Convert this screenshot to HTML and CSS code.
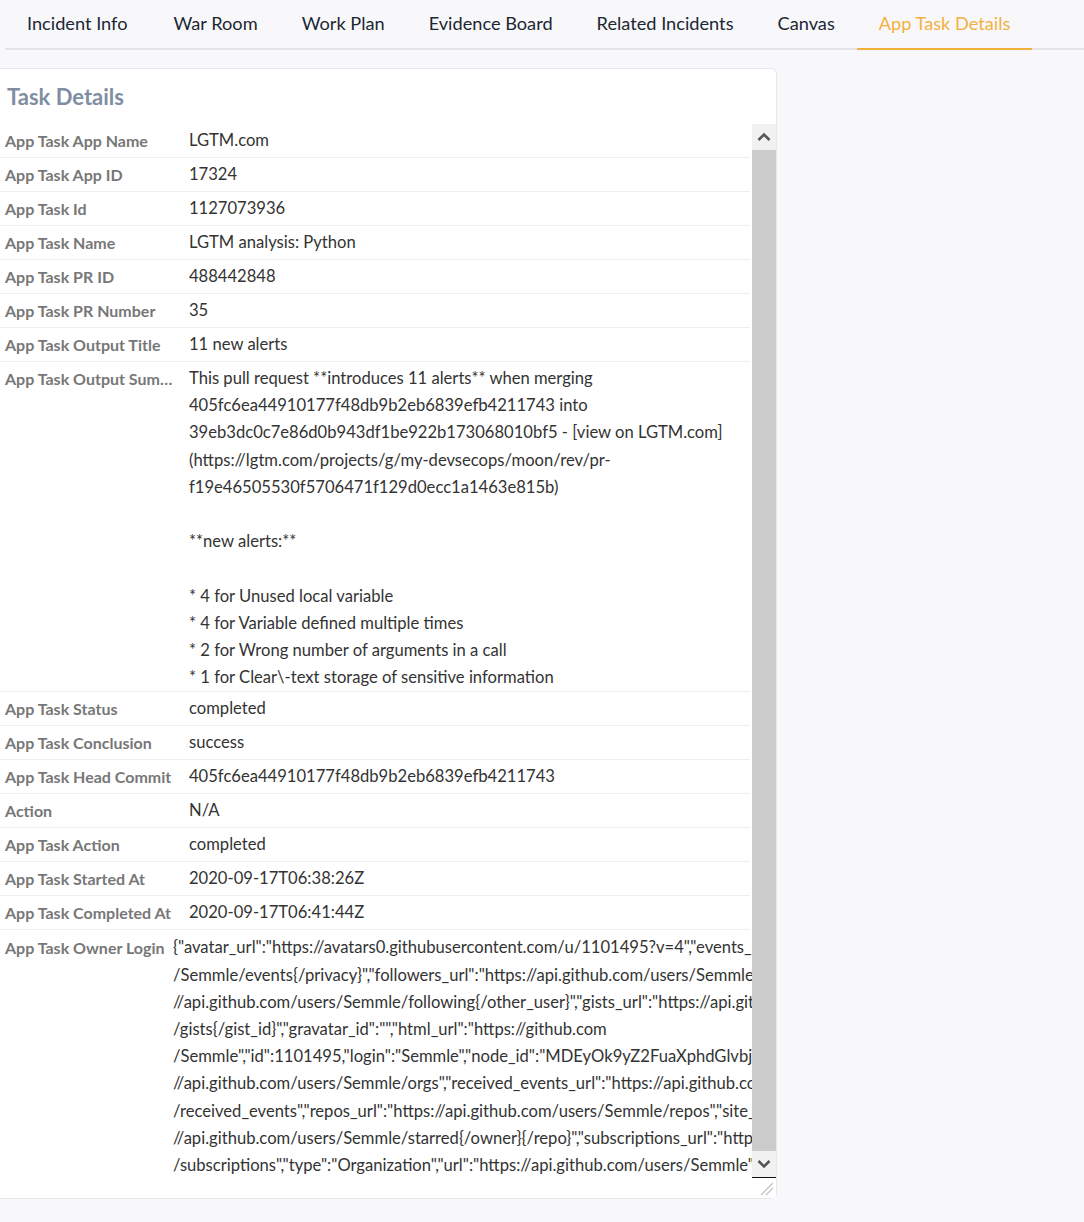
FILE: index.html
```html
<!DOCTYPE html>
<html lang="en">
<head>
<meta charset="utf-8">
<title>App Task Details</title>
<link rel="stylesheet" href="styles.css">
</head>
<body>
<nav class="tabs">
  <a class="tab">Incident Info</a>
  <a class="tab">War Room</a>
  <a class="tab">Work Plan</a>
  <a class="tab">Evidence Board</a>
  <a class="tab">Related Incidents</a>
  <a class="tab">Canvas</a>
  <a class="tab tab-active">App Task Details</a>
</nav>

<section class="card">
  <h2 class="card-title">Task Details</h2>
  <div class="scroller">
    <div class="rows">
      <div class="row"><div class="label">App Task App Name</div><div class="value">LGTM.com</div></div>
      <div class="row"><div class="label">App Task App ID</div><div class="value">17324</div></div>
      <div class="row"><div class="label">App Task Id</div><div class="value">1127073936</div></div>
      <div class="row"><div class="label">App Task Name</div><div class="value">LGTM analysis: Python</div></div>
      <div class="row"><div class="label">App Task PR ID</div><div class="value">488442848</div></div>
      <div class="row"><div class="label">App Task PR Number</div><div class="value">35</div></div>
      <div class="row"><div class="label">App Task Output Title</div><div class="value">11 new alerts</div></div>
      <div class="row row-multi"><div class="label">App Task Output Summary</div><div class="value value-lines">This pull request **introduces 11 alerts** when merging<br>405fc6ea44910177f48db9b2eb6839efb4211743 into<br>39eb3dc0c7e86d0b943df1be922b173068010bf5 - [view on LGTM.com]<br>(https://lgtm.com/projects/g/my-devsecops/moon/rev/pr-<br>f19e46505530f5706471f129d0ecc1a1463e815b)<br>&nbsp;<br>**new alerts:**<br>&nbsp;<br>* 4 for Unused local variable<br>* 4 for Variable defined multiple times<br>* 2 for Wrong number of arguments in a call<br>* 1 for Clear\-text storage of sensitive information</div></div>
      <div class="row"><div class="label">App Task Status</div><div class="value">completed</div></div>
      <div class="row"><div class="label">App Task Conclusion</div><div class="value">success</div></div>
      <div class="row"><div class="label">App Task Head Commit</div><div class="value">405fc6ea44910177f48db9b2eb6839efb4211743</div></div>
      <div class="row"><div class="label">Action</div><div class="value">N/A</div></div>
      <div class="row"><div class="label">App Task Action</div><div class="value">completed</div></div>
      <div class="row"><div class="label">App Task Started At</div><div class="value">2020-09-17T06:38:26Z</div></div>
      <div class="row"><div class="label">App Task Completed At</div><div class="value">2020-09-17T06:41:44Z</div></div>
      <div class="row row-multi row-owner"><div class="label">App Task Owner Login</div><div class="value value-lines">{"avatar_url":"https://avatars0.githubusercontent.com/u/1101495?v=4","events_url":"https://api.github.com/users<br>/Semmle/events{/privacy}","followers_url":"https://api.github.com/users/Semmle/followers","following_url":"https:<br>//api.github.com/users/Semmle/following{/other_user}","gists_url":"https://api.github.com/users/Semmle<br>/gists{/gist_id}","gravatar_id":"","html_url":"https://github.com<br>/Semmle","id":1101495,"login":"Semmle","node_id":"MDEyOk9yZ2FuaXphdGlvbjExMDE0OTU=","organizations_url":"https:<br>//api.github.com/users/Semmle/orgs","received_events_url":"https://api.github.com/users/Semmle<br>/received_events","repos_url":"https://api.github.com/users/Semmle/repos","site_admin":false,"starred_url":"https:<br>//api.github.com/users/Semmle/starred{/owner}{/repo}","subscriptions_url":"https://api.github.com/users/Semmle<br>/subscriptions","type":"Organization","url":"https://api.github.com/users/Semmle"}</div></div>
    </div>
    <div class="scrollbar">
      <div class="sb-btn sb-up">
        <svg width="14" height="10" viewBox="0 0 14 10"><path d="M1.5 8 L7 2.5 L12.5 8" fill="none" stroke="#555" stroke-width="2.6"/></svg>
      </div>
      <div class="sb-track"></div>
      <div class="sb-btn sb-down">
        <svg width="14" height="10" viewBox="0 0 14 10"><path d="M1.5 2 L7 7.5 L12.5 2" fill="none" stroke="#555" stroke-width="2.6"/></svg>
      </div>
      <div class="sb-corner">
        <svg width="20" height="20" viewBox="0 0 20 20"><path d="M5 17 L17 5 M10 17 L17 10" stroke="#c4c4c4" stroke-width="1.3" fill="none"/></svg>
      </div>
    </div>
  </div>
</section>
</body>
</html>
```

FILE: styles.css
```css
* { box-sizing: border-box; }

html, body {
  margin: 0;
  padding: 0;
  background: #f8f8fa;
  font-family: "Lato", "Liberation Sans", sans-serif;
  color: #333;
}

.tabs {
  display: flex;
  margin-left: 5px;
  width: 1079px;
  height: 50px;
  border-bottom: 2px solid #e3e4e8;
}

.tab {
  display: block;
  padding: 0 22px;
  height: 50px;
  line-height: 47px;
  font-size: 18.2px;
  color: #1c2633;
  cursor: pointer;
}

.tab:first-child {
  padding-right: 24px;
}

.tab-active {
  color: #f3b03f;
  border-bottom: 2px solid #f3b03f;
}

.card {
  margin-top: 18px;
  width: 777px;
  height: 1131px;
  background: #fff;
  border: 1px solid #e4e8ef;
  border-left: none;
  border-radius: 0 6px 6px 0;
  display: flex;
  flex-direction: column;
}

.card-title {
  margin: 0;
  height: 55px;
  padding: 15px 0 0 7px;
  font-size: 22px;
  font-weight: 700;
  color: #7f8ea2;
  line-height: 26px;
}

.scroller {
  flex: 1;
  display: flex;
  min-height: 0;
}

.rows {
  flex: 1;
  overflow: hidden;
  padding-right: 2px;
}

.row {
  display: flex;
  min-height: 34px;
  border-bottom: 1px solid #efefef;
  padding: 3px 0 2px;
  align-items: flex-start;
}

.row-multi {
  padding: 3px 0 0;
}

.row-owner {
  border-bottom: none;
  padding-top: 4px;
}

.label {
  flex: 0 0 189px;
  padding-left: 5px;
  padding-right: 10px;
  font-size: 16px;
  font-weight: 700;
  color: #777;
  line-height: 28px;
  white-space: nowrap;
  overflow: hidden;
  text-overflow: ellipsis;
}

.row-owner .label {
  flex-basis: 173px;
  padding-right: 0;
}

.value {
  flex: 1;
  font-size: 16.6px;
  line-height: 27.2px;
  color: #333;
  white-space: nowrap;
}

.scrollbar {
  flex: 0 0 24px;
  display: flex;
  flex-direction: column;
}

.sb-btn {
  height: 26px;
  background: #f1f1f1;
  display: flex;
  align-items: center;
  justify-content: center;
}

.sb-down {
  border-bottom: 1px solid #111;
  height: 27px;
}

.sb-track {
  flex: 1;
  background: #cbcbcb;
}

.sb-corner {
  height: 20px;
  background: #fff;
  display: flex;
  align-items: flex-end;
  justify-content: flex-end;
}
```
